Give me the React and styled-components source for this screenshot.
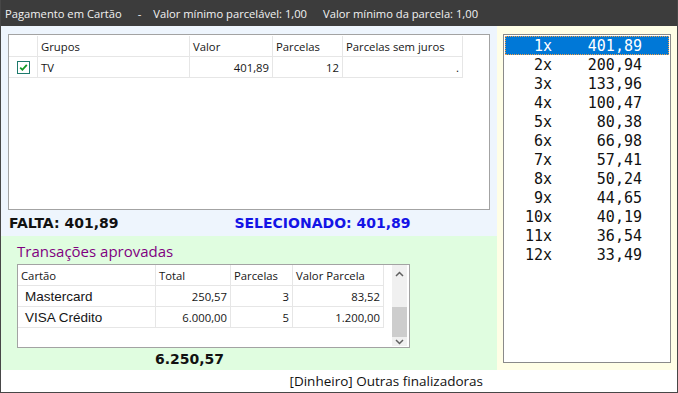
import React from "react";
import styled, { createGlobalStyle } from "styled-components";

const GlobalStyle = createGlobalStyle`
  html, body {
    margin: 0;
    padding: 0;
    background: #ffffff;
  }
  body {
    font-family: "Open Sans", "Noto Sans", sans-serif;
  }
`;

const Window = styled.div`
  width: 678px;
  height: 393px;
  box-sizing: border-box;
  border: 1px solid #474747;
  border-top: none;
  display: flex;
  flex-direction: column;
  background: #fff;
  overflow: hidden;
`;

const TitleBar = styled.div`
  height: 26px;
  margin: 0 -1px;
  background: #3c3c3c;
  color: #f2f2f2;
  font-size: 11.2px;
  display: flex;
  align-items: center;
  padding-left: 5px;
  white-space: nowrap;
`;

const TitleItem = styled.span`
  margin-left: ${(p) => p.$gap || 0}px;
`;

const Body = styled.div`
  display: flex;
  height: 344px;
`;

const LeftCol = styled.div`
  width: 496px;
  display: flex;
  flex-direction: column;
`;

const TopSection = styled.div`
  height: 210px;
  background: #eef5fd;
  display: flex;
  flex-direction: column;
  padding: 8px 0 0 7px;
  box-sizing: border-box;
`;

const GridBox = styled.div`
  width: 482px;
  height: 176px;
  box-sizing: border-box;
  border: 1px solid #a3a3a3;
  background: #fff;
  padding-top: 1px;
`;

const Row = styled.div`
  display: flex;
  height: ${(p) => p.$h || 21}px;
`;

const Cell = styled.div`
  width: ${(p) => p.$w}px;
  box-sizing: border-box;
  border-right: 1px solid #e6e6e6;
  border-bottom: 1px solid #e6e6e6;
  display: flex;
  align-items: center;
  justify-content: ${(p) => (p.$right ? "flex-end" : p.$center ? "center" : "flex-start")};
  padding: 0 3px;
  font-size: 11.3px;
  color: #161616;
  white-space: nowrap;
  font-family: ${(p) => (p.$arial ? '"Liberation Sans", Arial, sans-serif' : "inherit")};
  ${(p) => (p.$arial ? "font-size: 13.5px; padding-left: 7px;" : "")}
`;

const SummaryRow = styled.div`
  height: 26px;
  display: flex;
  align-items: center;
  padding-left: 1px;
  font-family: "DejaVu Sans", Verdana, sans-serif;
  font-weight: bold;
  font-size: 14px;
`;

const Summary = styled.span`
  color: ${(p) => p.$color || "#111"};
  margin-left: ${(p) => p.$gap || 0}px;
`;

const GreenSection = styled.div`
  height: 134px;
  background: #e0fde0;
  padding-left: 16px;
  box-sizing: border-box;
  display: flex;
  flex-direction: column;
`;

const SectionTitle = styled.div`
  height: 28px;
  display: flex;
  align-items: center;
  padding-top: 2px;
  box-sizing: border-box;
  color: #800080;
  font-size: 15px;
`;

const GridBox2 = styled.div`
  width: 393px;
  height: 84px;
  box-sizing: border-box;
  border: 1px solid #a3a3a3;
  background: #fff;
  display: flex;
  padding: 0 2px 1px 0;
`;

const TableArea = styled.div`
  width: 374px;
`;

const ScrollBar = styled.div`
  width: 15px;
  background: #f0f0f0;
  display: flex;
  flex-direction: column;
  align-items: center;
`;

const Arrow = styled.div`
  height: ${(p) => p.$h || 17}px;
  display: flex;
  align-items: center;
  justify-content: center;
  width: 100%;
`;

const Thumb = styled.div`
  width: 15px;
  height: 30px;
  margin-top: 25px;
  background: #cdcdcd;
`;

const TotalRow = styled.div`
  height: 22px;
  display: flex;
  align-items: center;
  padding-left: 138px;
  font-family: "DejaVu Sans", Verdana, sans-serif;
  font-weight: bold;
  font-size: 14px;
  color: #111;
`;

const RightPanel = styled.div`
  flex: 1;
  background: #fffee6;
  padding: 8px 6px 7px 6px;
  box-sizing: border-box;
  display: flex;
`;

const ListBox = styled.div`
  flex: 1;
  border: 1px solid #8a8a8a;
  background: #fff;
  padding: 1px;
  font-family: "DejaVu Sans Mono", Consolas, monospace;
  font-size: 15px;
`;

const ListItem = styled.div`
  height: 19px;
  display: flex;
  align-items: center;
  box-sizing: border-box;
  color: ${(p) => (p.$selected ? "#ffffff" : "#111")};
  background: ${(p) => (p.$selected ? "#0078d7" : "transparent")};
  border: 1px dotted ${(p) => (p.$selected ? "#f0a048" : "transparent")};
`;

const Count = styled.span`
  width: 46px;
  text-align: right;
`;

const Amount = styled.span`
  width: 90px;
  text-align: right;
`;

const BottomBar = styled.div`
  height: 22px;
  display: flex;
  align-items: center;
  justify-content: flex-end;
  padding-right: 194px;
  font-size: 13.5px;
  color: #111;
`;

const CheckIcon = () => (
  <svg width="13" height="13" viewBox="0 0 13 13">
    <rect x="0.5" y="0.5" width="12" height="12" fill="#fff" stroke="#1d7a6c" />
    <path d="M3.2 6.6 L5.4 8.8 L9.8 3.8" fill="none" stroke="#139a25" strokeWidth="1.8" />
  </svg>
);

const Chevron = ({ down }) => (
  <svg width="9" height="6" viewBox="0 0 9 6">
    <path
      d={down ? "M1 1 L4.5 4.5 L8 1" : "M1 5 L4.5 1.5 L8 5"}
      fill="none"
      stroke="#606060"
      strokeWidth="1.5"
    />
  </svg>
);

const parcelas = [
  ["1x", "401,89"],
  ["2x", "200,94"],
  ["3x", "133,96"],
  ["4x", "100,47"],
  ["5x", "80,38"],
  ["6x", "66,98"],
  ["7x", "57,41"],
  ["8x", "50,24"],
  ["9x", "44,65"],
  ["10x", "40,19"],
  ["11x", "36,54"],
  ["12x", "33,49"],
];

const transacoes = [
  ["Mastercard", "250,57", "3", "83,52"],
  ["VISA Crédito", "6.000,00", "5", "1.200,00"],
];

const cols1 = [29, 152, 83, 70, 120];
const cols2 = [138, 75, 62, 91];

export default function App() {
  return (
    <>
      <GlobalStyle />
      <Window>
        <TitleBar>
          <TitleItem>Pagamento em Cartão</TitleItem>
          <TitleItem $gap={16}>-</TitleItem>
          <TitleItem $gap={12}>Valor mínimo parcelável: 1,00</TitleItem>
          <TitleItem $gap={16}>Valor mínimo da parcela: 1,00</TitleItem>
        </TitleBar>
        <Body>
          <LeftCol>
            <TopSection>
              <GridBox>
                <Row>
                  <Cell $w={cols1[0]} />
                  <Cell $w={cols1[1]}>Grupos</Cell>
                  <Cell $w={cols1[2]}>Valor</Cell>
                  <Cell $w={cols1[3]}>Parcelas</Cell>
                  <Cell $w={cols1[4]}>Parcelas sem juros</Cell>
                </Row>
                <Row>
                  <Cell $w={cols1[0]} $center>
                    <CheckIcon />
                  </Cell>
                  <Cell $w={cols1[1]}>TV</Cell>
                  <Cell $w={cols1[2]} $right>401,89</Cell>
                  <Cell $w={cols1[3]} $right>12</Cell>
                  <Cell $w={cols1[4]} $right>.</Cell>
                </Row>
              </GridBox>
              <SummaryRow>
                <Summary>FALTA: 401,89</Summary>
                <Summary $color="#1414e6" $gap={116}>SELECIONADO: 401,89</Summary>
              </SummaryRow>
            </TopSection>
            <GreenSection>
              <SectionTitle>Transações aprovadas</SectionTitle>
              <GridBox2>
                <TableArea>
                  <Row>
                    <Cell $w={cols2[0]}>Cartão</Cell>
                    <Cell $w={cols2[1]}>Total</Cell>
                    <Cell $w={cols2[2]}>Parcelas</Cell>
                    <Cell $w={cols2[3]}>Valor Parcela</Cell>
                  </Row>
                  {transacoes.map((t) => (
                    <Row key={t[0]}>
                      <Cell $w={cols2[0]} $arial>{t[0]}</Cell>
                      <Cell $w={cols2[1]} $right>{t[1]}</Cell>
                      <Cell $w={cols2[2]} $right>{t[2]}</Cell>
                      <Cell $w={cols2[3]} $right>{t[3]}</Cell>
                    </Row>
                  ))}
                </TableArea>
                <ScrollBar>
                  <Arrow>
                    <Chevron />
                  </Arrow>
                  <Thumb />
                  <Arrow $h={9}>
                    <Chevron down />
                  </Arrow>
                </ScrollBar>
              </GridBox2>
              <TotalRow>6.250,57</TotalRow>
            </GreenSection>
          </LeftCol>
          <RightPanel>
            <ListBox>
              {parcelas.map(([n, v], i) => (
                <ListItem key={n} $selected={i === 0}>
                  <Count>{n}</Count>
                  <Amount>{v}</Amount>
                </ListItem>
              ))}
            </ListBox>
          </RightPanel>
        </Body>
        <BottomBar>[Dinheiro] Outras finalizadoras</BottomBar>
      </Window>
    </>
  );
}
